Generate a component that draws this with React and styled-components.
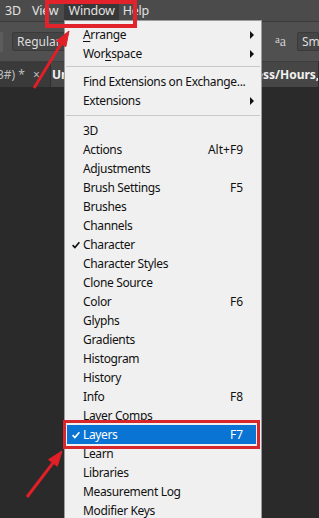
import React from "react";
import styled, { createGlobalStyle } from "styled-components";

const GlobalStyle = createGlobalStyle`
  html, body {
    margin: 0;
    padding: 0;
    background: #2a2a2a;
  }
  body {
    width: 319px;
    height: 518px;
    overflow: hidden;
    font-family: "Noto Sans", "Liberation Sans", sans-serif;
  }
`;

const Screen = styled.div`
  position: relative;
  width: 319px;
  height: 518px;
  display: flex;
  flex-direction: column;
  overflow: hidden;
  background: #2a2a2a;
`;

const MenuBar = styled.div`
  height: 21px;
  display: flex;
  align-items: center;
  padding-left: 1px;
  background: #4b4b4b;
  border-bottom: 1px solid #3b3b3b;
  font-size: 12.5px;
  letter-spacing: -0.2px;
  color: #e2e2e2;
`;

const MenuBarItem = styled.div`
  height: 18px;
  display: flex;
  align-items: center;
  padding: 0 4px;
  margin-right: ${(props) => props.$gap || "0"};
  background: ${(props) => (props.$active ? "#383838" : "transparent")};
`;

const OptionsBar = styled.div`
  height: 39px;
  display: flex;
  align-items: center;
  background: #505050;
  border-bottom: 1px solid #3d3d3d;
`;

const Divider = styled.div`
  width: 3px;
  height: 20px;
  background: #5c5c5c;
  margin-right: 9px;
`;

const DropBox = styled.div`
  height: 19px;
  width: ${(props) => props.$width};
  display: flex;
  align-items: center;
  padding-left: 4px;
  box-sizing: border-box;
  background: #454545;
  border: 1px solid #3a3a3a;
  border-radius: 2px;
  font-size: 12px;
  color: #dedede;
`;

const Spacer = styled.div`
  flex: 1;
`;

const AntiAlias = styled.div`
  display: flex;
  align-items: flex-end;
  margin-right: 11px;
  font-family: "Liberation Serif", serif;
  color: #cfcfcf;
  line-height: 1;
`;

const SmallA = styled.span`
  font-size: 11px;
  position: relative;
  top: -4px;
`;

const BigA = styled.span`
  font-size: 14px;
`;

const TabBar = styled.div`
  height: 25px;
  display: flex;
  background: #3a3a3a;
`;

const Tab = styled.div`
  height: 100%;
  display: flex;
  align-items: center;
  box-sizing: border-box;
  padding-left: ${(props) => props.$pad};
  width: ${(props) => props.$width || "auto"};
  flex: ${(props) => (props.$grow ? 1 : "none")};
  background: ${(props) => (props.$active ? "#464646" : "#3a3a3a")};
  border-right: 1px solid #2e2e2e;
  font-size: 12px;
  font-weight: ${(props) => (props.$active ? 700 : 400)};
  color: ${(props) => (props.$active ? "#f2f2f2" : "#bdbdbd")};
  white-space: nowrap;
  overflow: hidden;
`;

const TabName = styled.span`
  margin-left: -3px;
`;

const TabClose = styled.span`
  margin-left: 8px;
  font-size: 12px;
  color: #bdbdbd;
`;

const Canvas = styled.div`
  flex: 1;
  background: #2a2a2a;
`;

const DropMenu = styled.div`
  position: absolute;
  left: 64px;
  top: 20px;
  width: 198px;
  height: 520px;
  box-sizing: border-box;
  padding-top: 4px;
  background: #f0f0f0;
  border: 1px solid #9c9c9c;
  font-size: 12px;
  letter-spacing: -0.35px;
  color: #111;
  z-index: 2;
`;

const Item = styled.div`
  position: relative;
  height: 19px;
  margin: 0 5px 0 2px;
  display: grid;
  grid-template-columns: 16px 1fr auto 13px;
  align-items: center;
  background: ${(props) => (props.$selected ? "#0a74d4" : "transparent")};
  color: ${(props) => (props.$selected ? "#ffffff" : "#111111")};
  white-space: nowrap;

  &::after {
    content: "";
    display: ${(props) => (props.$selected ? "block" : "none")};
    position: absolute;
    left: -4px;
    right: -4px;
    top: -5px;
    bottom: -5px;
    border: 3px solid #d8262d;
  }
`;

const Check = styled.svg`
  margin-left: 5px;
`;

const Shortcut = styled.span`
  text-align: right;
  letter-spacing: 0;
`;

const SubArrow = styled.span`
  justify-self: start;
  margin-left: 7px;
  width: 0;
  height: 0;
  border-top: 4px solid transparent;
  border-bottom: 4px solid transparent;
  border-left: 4px solid #111;
`;

const Key = styled.span`
  text-decoration: underline;
  text-underline-offset: 2px;
`;

const Separator = styled.div`
  height: 1px;
  background: #c8c8c8;
  margin: ${(props) => props.$top} 1px 5px 1px;
`;

const HighlightBox = styled.div`
  position: absolute;
  left: 45px;
  top: 0;
  width: 92px;
  height: 28px;
  box-sizing: border-box;
  border: 4px solid #e3232b;
  z-index: 4;
`;

const Overlay = styled.svg`
  position: absolute;
  left: 0;
  top: 0;
  z-index: 5;
  pointer-events: none;
`;

const Arrow = ({ x1, y1, x2, y2 }) => {
  const dx = x2 - x1;
  const dy = y2 - y1;
  const len = Math.sqrt(dx * dx + dy * dy);
  const ux = dx / len;
  const uy = dy / len;
  const bx = x2 - ux * 15;
  const by = y2 - uy * 15;
  const px = -uy * 5.5;
  const py = ux * 5.5;
  return (
    <g fill="#e11f26" stroke="#e11f26">
      <line x1={x1} y1={y1} x2={bx + ux * 2} y2={by + uy * 2} strokeWidth="3" />
      <polygon
        points={`${x2},${y2} ${bx + px},${by + py} ${bx - px},${by - py}`}
        strokeWidth="1"
        strokeLinejoin="round"
      />
    </g>
  );
};

const CheckMark = ({ color }) => (
  <Check width="8" height="8" viewBox="0 0 8 8">
    <path d="M0.6 4.2 L2.9 6.6 L7.4 1.2" fill="none" stroke={color} strokeWidth="1.7" />
  </Check>
);

const topItems = [
  { label: <><Key>A</Key>rrange</>, sub: true },
  { label: <>Wor<Key>k</Key>space</>, sub: true },
];

const extItems = [
  { label: "Find Extensions on Exchange..." },
  { label: "Extensions", sub: true },
];

const panelItems = [
  { label: "3D" },
  { label: "Actions", key: "Alt+F9" },
  { label: "Adjustments" },
  { label: "Brush Settings", key: "F5" },
  { label: "Brushes" },
  { label: "Channels" },
  { label: "Character", checked: true },
  { label: "Character Styles" },
  { label: "Clone Source" },
  { label: "Color", key: "F6" },
  { label: "Glyphs" },
  { label: "Gradients" },
  { label: "Histogram" },
  { label: "History" },
  { label: "Info", key: "F8" },
  { label: "Layer Comps" },
  { label: "Layers", key: "F7", checked: true, selected: true },
  { label: "Learn" },
  { label: "Libraries" },
  { label: "Measurement Log" },
  { label: "Modifier Keys" },
];

const MenuRow = ({ item }) => (
  <Item $selected={item.selected}>
    <span>{item.checked && <CheckMark color={item.selected ? "#ffffff" : "#111111"} />}</span>
    <span>{item.label}</span>
    <Shortcut>{item.key}</Shortcut>
    {item.sub ? <SubArrow /> : <span />}
  </Item>
);

const App = () => {
  return (
    <Screen>
      <GlobalStyle />
      <MenuBar>
        <MenuBarItem $gap="3px">3D</MenuBarItem>
        <MenuBarItem $gap="2px">View</MenuBarItem>
        <MenuBarItem $active>Window</MenuBarItem>
        <MenuBarItem>Help</MenuBarItem>
      </MenuBar>
      <OptionsBar>
        <Divider />
        <DropBox $width="70px">Regular</DropBox>
        <Spacer />
        <AntiAlias>
          <SmallA>a</SmallA>
          <BigA>a</BigA>
        </AntiAlias>
        <DropBox $width="22px">Sm</DropBox>
      </OptionsBar>
      <TabBar>
        <Tab $width="51px" $pad="0">
          <TabName>3#) *</TabName>
          <TabClose>×</TabClose>
        </Tab>
        <Tab $active $grow $pad="1px">
          Untitled-1 copy.psd @ 100% (Business/Hours, RGB/8#)
        </Tab>
      </TabBar>
      <Canvas />

      <DropMenu>
        {topItems.map((item, index) => (
          <MenuRow item={item} key={"t" + index} />
        ))}
        <Separator $top="3px" />
        {extItems.map((item, index) => (
          <MenuRow item={item} key={"e" + index} />
        ))}
        <Separator $top="5px" />
        {panelItems.map((item, index) => (
          <MenuRow item={item} key={"p" + index} />
        ))}
      </DropMenu>

      <HighlightBox />
      <Overlay width="319" height="518" viewBox="0 0 319 518">
        <Arrow x1={34} y1={88} x2={69} y2={31} />
        <Arrow x1={27} y1={497} x2={62} y2={451} />
      </Overlay>
    </Screen>
  );
};

export default App;
